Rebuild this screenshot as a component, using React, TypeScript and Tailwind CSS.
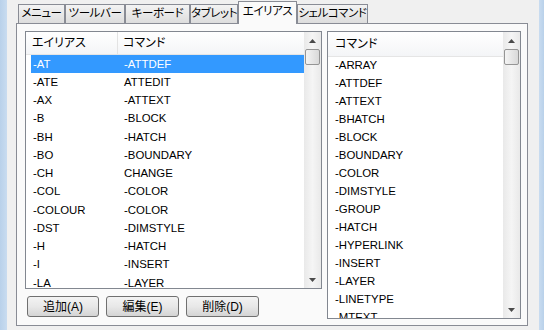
import React from "react";

const aliases: [string, string][] = [
  ["-AT", "-ATTDEF"],
  ["-ATE", "ATTEDIT"],
  ["-AX", "-ATTEXT"],
  ["-B", "-BLOCK"],
  ["-BH", "-HATCH"],
  ["-BO", "-BOUNDARY"],
  ["-CH", "CHANGE"],
  ["-COL", "-COLOR"],
  ["-COLOUR", "-COLOR"],
  ["-DST", "-DIMSTYLE"],
  ["-H", "-HATCH"],
  ["-I", "-INSERT"],
  ["-LA", "-LAYER"],
];

const commands = [
  "-ARRAY",
  "-ATTDEF",
  "-ATTEXT",
  "-BHATCH",
  "-BLOCK",
  "-BOUNDARY",
  "-COLOR",
  "-DIMSTYLE",
  "-GROUP",
  "-HATCH",
  "-HYPERLINK",
  "-INSERT",
  "-LAYER",
  "-LINETYPE",
  "-MTEXT",
];

const tabs = [
  { label: "メニュー", w: "w-[47px]" },
  { label: "ツールバー", w: "w-[60px]" },
  { label: "キーボード", w: "w-[65px]" },
  { label: "タブレット", w: "w-[48px]" },
  { label: "エイリアス", w: "w-[59px]", active: true },
  { label: "シェルコマンド", w: "w-[71px]" },
];

const Arrow = ({ down }: { down?: boolean }) => (
  <svg width="7" height="4" viewBox="0 0 7 4">
    <polygon
      points={down ? "0,0 7,0 3.5,4" : "3.5,0 7,4 0,4"}
      fill="#4a4a4a"
    />
  </svg>
);

const Scrollbar = () => (
  <div className="flex w-[17px] flex-col bg-gradient-to-r from-[#e9e9e9] via-[#f5f5f5] to-[#e9e9e9]">
    <div className="flex h-[17px] items-center justify-center">
      <Arrow />
    </div>
    <div className="mx-px h-[16px] rounded-[2px] border border-[#959595] bg-gradient-to-r from-[#f4f4f4] to-[#d9d9d9]" />
    <div className="flex-1" />
    <div className="flex h-[17px] items-center justify-center">
      <Arrow down />
    </div>
  </div>
);

const Button = ({ label, w }: { label: string; w: string }) => (
  <button
    className={`${w} h-[21px] rounded-[3px] border border-[#707070] bg-gradient-to-b from-[#f3f3f3] via-[#e8e8e8] to-[#d4d4d4] text-[12px] leading-none text-black`}
  >
    {label}
  </button>
);

export default function App() {
  return (
    <div className="flex h-[330px] w-[544px] overflow-hidden bg-[#f0f0f0] font-['Liberation_Sans','Noto_Sans_CJK_JP',sans-serif] text-black [font-feature-settings:'palt']">
      <div className="w-[7px] bg-gradient-to-r from-[#b9d1ea] to-[#c9dcf0]" />
      <div className="ml-[9px] flex w-[512px] flex-col">
        {/* tabs */}
        <div className="-mb-px flex h-[24px] items-end pl-[2px]">
          {tabs.map((t) =>
            t.active ? (
              <div
                key={t.label}
                className={`${t.w} relative z-10 flex h-[23px] shrink-0 items-center justify-center whitespace-nowrap border border-b-0 border-[#898c95] bg-[#fafafa] pb-[2px] text-[11.5px] tracking-[-0.4px]`}
              >
                {t.label}
              </div>
            ) : (
              <div
                key={t.label}
                className={`${t.w} flex h-[20px] shrink-0 items-center justify-center whitespace-nowrap border border-b-0 border-[#898c95] bg-gradient-to-b from-[#f3f3f3] to-[#dcdcdc] pb-[1px] text-[11.5px] tracking-[-0.4px]`}
              >
                {t.label}
              </div>
            )
          )}
        </div>
        {/* panel */}
        <div className="flex h-[303px] border border-[#898c95] bg-[#fafafa] pb-[6px] pl-[8px] pr-[6px] pt-[7px]">
          <div className="flex w-[297px] flex-col">
            <div className="flex h-[258px] border border-[#828790] bg-white">
              <div className="flex flex-1 flex-col overflow-hidden">
                <div className="flex h-[23px] shrink-0 items-center border-b border-[#e5e5e5] bg-gradient-to-b from-white to-[#f4f5f7] text-[12px]">
                  <div className="h-full w-[92px] border-r border-[#e3e3e3] pl-[6px] leading-[23px]">
                    エイリアス
                  </div>
                  <div className="pl-[5px]">コマンド</div>
                </div>
                {aliases.map(([a, c], i) => (
                  <div
                    key={a}
                    className={`ml-[5px] flex h-[18.25px] shrink-0 items-center text-[11.4px] ${
                      i === 0 ? "bg-[#3399ff] text-white" : ""
                    }`}
                  >
                    <div className="w-[93px] pl-[2px]">{a}</div>
                    <div>{c}</div>
                  </div>
                ))}
              </div>
              <Scrollbar />
            </div>
            <div className="mt-[7px] flex gap-[7px] pl-[2px]">
              <Button label="追加(A)" w="w-[72px]" />
              <Button label="編集(E)" w="w-[73px]" />
              <Button label="削除(D)" w="w-[73px]" />
            </div>
          </div>
          <div className="ml-[5px] flex h-[288px] flex-1 border border-[#828790] bg-white">
            <div className="flex flex-1 flex-col overflow-hidden">
              <div className="flex h-[25px] shrink-0 items-center border-b border-[#e5e5e5] bg-gradient-to-b from-white to-[#f4f5f7] pl-[7px] text-[12px]">
                コマンド
              </div>
              {commands.map((c) => (
                <div
                  key={c}
                  className="flex h-[18px] shrink-0 items-center pl-[7px] text-[11.4px]"
                >
                  {c}
                </div>
              ))}
            </div>
            <Scrollbar />
          </div>
        </div>
      </div>
      <div className="ml-auto w-[5px] bg-gradient-to-r from-[#c9dcf0] to-[#b9d1ea]" />
    </div>
  );
}
